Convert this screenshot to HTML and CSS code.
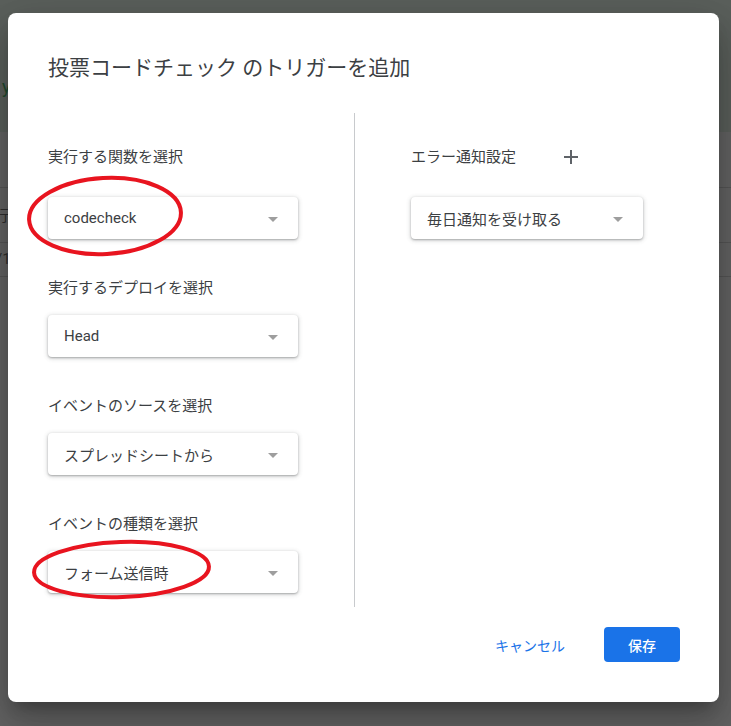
FILE: index.html
```html
<!DOCTYPE html>
<html lang="ja">
<head>
<meta charset="utf-8">
<title>トリガーを追加</title>
<link rel="stylesheet" href="styles.css">
</head>
<body>
<div class="page">
  <div class="page-header"><span class="bg-y">y</span></div>
  <div class="bg-row"></div>
  <div class="bg-row bg-row-line"><span class="bg-text">行</span></div>
  <div class="bg-row bg-row-short bg-row-line"><span class="bg-text">/1</span></div>
  <div class="bg-rest bg-row-line"></div>
</div>

<div class="dialog">
  <h1 class="dialog-title">投票コードチェック のトリガーを追加</h1>
  <div class="dialog-body">
    <div class="col col-left">
      <div class="field">
        <div class="field-label field-label-first">実行する関数を選択</div>
        <div class="select"><span class="select-value">codecheck</span><span class="caret"></span></div>
      </div>
      <div class="field">
        <div class="field-label">実行するデプロイを選択</div>
        <div class="select"><span class="select-value">Head</span><span class="caret"></span></div>
      </div>
      <div class="field">
        <div class="field-label">イベントのソースを選択</div>
        <div class="select"><span class="select-value">スプレッドシートから</span><span class="caret"></span></div>
      </div>
      <div class="field">
        <div class="field-label">イベントの種類を選択</div>
        <div class="select"><span class="select-value">フォーム送信時</span><span class="caret"></span></div>
      </div>
    </div>
    <div class="col col-right">
      <div class="field">
        <div class="field-label field-label-first">
          <span>エラー通知設定</span>
          <span class="icon-btn" aria-label="追加">
            <svg width="14" height="14" viewBox="0 0 14 14"><path d="M7 0v14M0 7h14" stroke="#5f6368" stroke-width="2" fill="none"/></svg>
          </span>
        </div>
        <div class="select select-narrow"><span class="select-value">毎日通知を受け取る</span><span class="caret"></span></div>
      </div>
    </div>
  </div>
  <div class="dialog-footer">
    <button class="btn btn-text">キャンセル</button>
    <button class="btn btn-primary">保存</button>
  </div>
</div>

<svg class="annotations" width="731" height="726" viewBox="0 0 731 726">
  <ellipse cx="105" cy="216" rx="76" ry="38" fill="none" stroke="#e8141f" stroke-width="4" transform="rotate(-3 105 216)"/>
  <ellipse cx="121.5" cy="569.5" rx="87.5" ry="27.5" fill="none" stroke="#e8141f" stroke-width="4" transform="rotate(-2 121.5 569.5)"/>
</svg>
</body>
</html>
```

FILE: styles.css
```css
* { box-sizing: border-box; }

html, body {
  margin: 0;
  padding: 0;
  width: 731px;
  height: 726px;
  overflow: hidden;
  background: #646464;
  font-family: "Roboto", "Noto Sans CJK JP", sans-serif;
}

.page {
  width: 731px;
  height: 726px;
  display: flex;
  flex-direction: column;
}

.page-header {
  height: 132px;
  background: #5b605c;
  position: relative;
}

.bg-y {
  position: absolute;
  left: 2px;
  top: 76px;
  font-size: 18px;
  color: #1f4a2e;
}

.bg-row {
  height: 55px;
  position: relative;
}

.bg-row-short { height: 34px; }

.bg-row-line { border-top: 1px solid #565656; }

.bg-rest { flex: 1; }

.bg-text {
  position: absolute;
  left: -6px;
  top: 16px;
  font-size: 15px;
  color: #2f2f2f;
}

.bg-row-short .bg-text { left: -4px; top: 7px; }

.dialog {
  position: absolute;
  left: 8px;
  top: 13px;
  width: 711px;
  height: 689px;
  background: #fff;
  border-radius: 8px;
  padding: 41px 39px 39px 40px;
  display: flex;
  flex-direction: column;
  box-shadow: 0 11px 15px -7px rgba(0,0,0,.25), 0 24px 38px 3px rgba(0,0,0,.16), 0 9px 46px 8px rgba(0,0,0,.12);
}

.dialog-title {
  margin: 0 0 31px;
  height: 28px;
  font-size: 21px;
  line-height: 28px;
  font-weight: 400;
  color: #3c4043;
  white-space: nowrap;
}

.dialog-body {
  display: flex;
  height: 494px;
}

.col { padding-top: 24px; }

.col-left { width: 306px; }

.col-right {
  flex: 1;
  border-left: 1px solid #c8cacd;
  padding-left: 56px;
}

.field + .field { margin-top: 39px; }

.field-label {
  height: 20px;
  line-height: 20px;
  font-size: 15px;
  color: #3c4043;
  margin-bottom: 17px;
  white-space: nowrap;
}

.field-label-first {
  height: 40px;
  margin-bottom: 20px;
  display: flex;
  align-items: center;
}

.icon-btn {
  width: 32px;
  height: 32px;
  margin-left: 39px;
  display: flex;
  align-items: center;
  justify-content: center;
}

.select {
  width: 250px;
  height: 42px;
  border-radius: 4px;
  background: #fff;
  display: flex;
  align-items: center;
  justify-content: space-between;
  padding: 0 20px 0 16px;
  box-shadow: 0 1px 2px rgba(60,64,67,.35), 0 1px 4px 1px rgba(60,64,67,.18);
}

.select-narrow { width: 232px; }

.select-value {
  font-size: 15px;
  color: #3c4043;
  white-space: nowrap;
}

.caret {
  width: 0;
  height: 0;
  border-left: 5px solid transparent;
  border-right: 5px solid transparent;
  border-top: 5px solid #9e9e9e;
  margin-top: 2px;
}

.dialog-footer {
  margin-top: 20px;
  display: flex;
  justify-content: flex-end;
  align-items: center;
}

.btn {
  height: 35px;
  border: none;
  border-radius: 4px;
  font-family: "Roboto", "Noto Sans CJK JP", sans-serif;
  font-size: 14px;
  cursor: pointer;
  background: none;
}

.btn-text {
  color: #1a73e8;
  padding: 0 16px;
  margin-right: 23px;
}

.btn-primary {
  width: 76px;
  background: #1a73e8;
  color: #fff;
  font-weight: 500;
  padding: 0;
}

.annotations {
  position: absolute;
  left: 0;
  top: 0;
  pointer-events: none;
}
```
